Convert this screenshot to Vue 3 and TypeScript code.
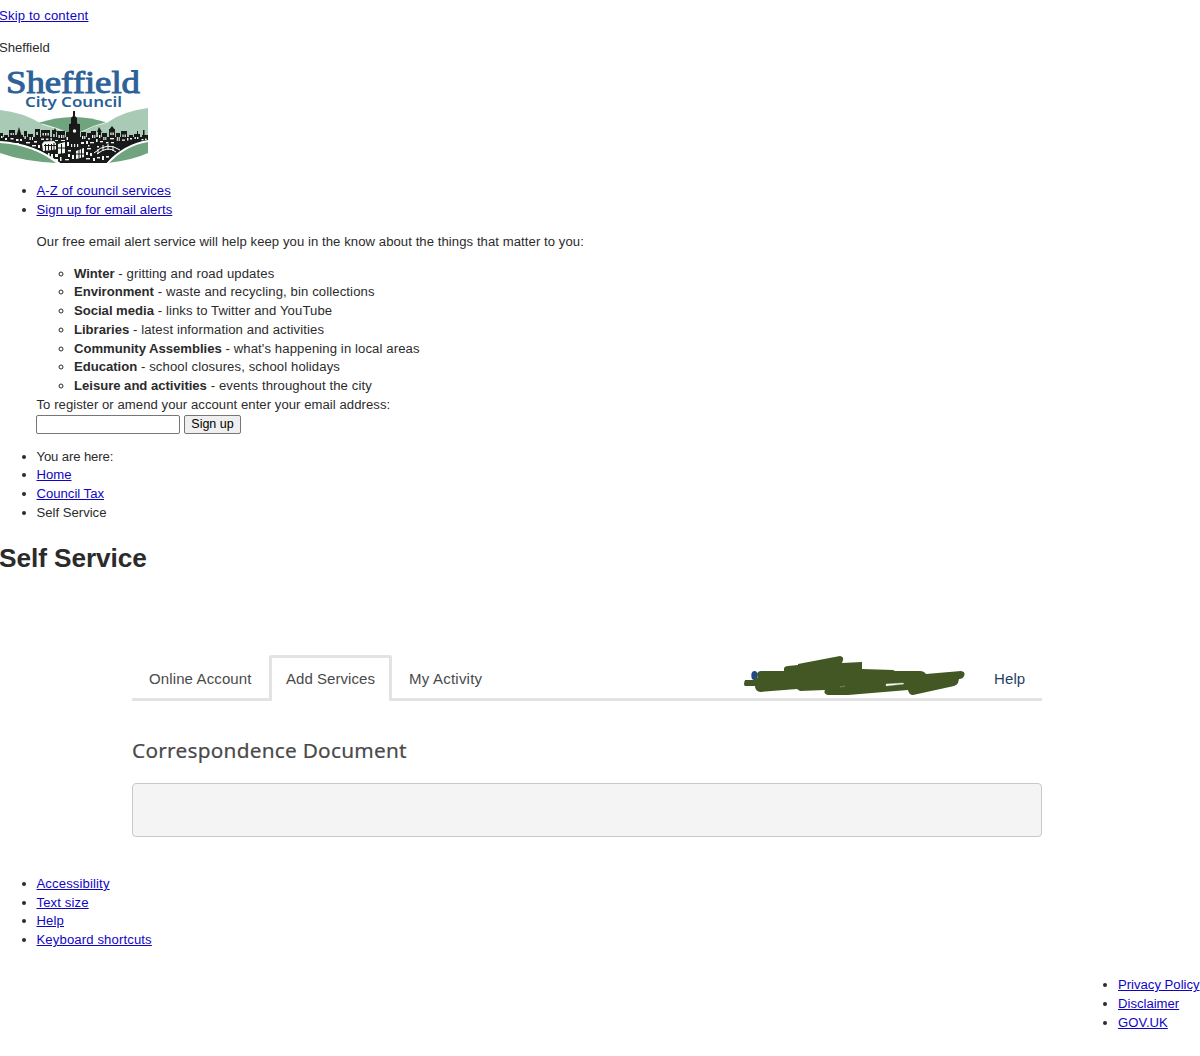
<script setup lang="ts">
interface Alert { name: string; text: string }

const alerts: Alert[] = [
  { name: 'Winter', text: 'gritting and road updates' },
  { name: 'Environment', text: 'waste and recycling, bin collections' },
  { name: 'Social media', text: 'links to Twitter and YouTube' },
  { name: 'Libraries', text: 'latest information and activities' },
  { name: 'Community Assemblies', text: "what's happening in local areas" },
  { name: 'Education', text: 'school closures, school holidays' },
  { name: 'Leisure and activities', text: 'events throughout the city' },
]
const helpLinks: string[] = ['Accessibility', 'Text size', 'Help', 'Keyboard shortcuts']
const legalLinks: string[] = ['Privacy Policy', 'Disclaimer', 'GOV.UK']

// Skyline rooftops: x, y, width, height
const buildings: number[][] = [
  [0, 71, 3, 8], [4, 73, 4, 8], [9, 68, 6, 12], [15, 73, 8, 8], [24, 69, 3, 12], [28, 72, 5, 10],
  [35, 67, 5, 14], [41, 68, 9, 14], [52, 68, 4, 14], [57, 69, 8, 14], [66, 70, 4, 10],
  [69, 62, 11, 30], [81, 70, 5, 12], [87, 71, 4, 10], [91, 69, 5, 12], [98, 68, 3, 12], [102, 71, 5, 10],
  [109, 67, 6, 14], [116, 71, 4, 10], [121, 69, 6, 10], [129, 73, 4, 8], [134, 72, 6, 7], [142, 73, 6, 5],
]
// Lit windows: x, y, width, height
const windows: number[][] = [
  [1, 74, 1.5, 2], [5, 76, 2, 2], [10.5, 71, 1.3, 2], [12.8, 71, 1, 2], [10.5, 76, 3, 1.5], [16, 77, 2.5, 2],
  [20, 77, 2, 2], [16, 81, 3, 1.2], [24.5, 74, 1.3, 3], [29.5, 75, 1.3, 3], [32, 75, 1, 3], [26, 80, 4, 1.4],
  [32, 83, 4, 1.4], [34, 79, 3, 1.6], [38, 83, 2, 3], [36.3, 70, 1.5, 3], [42.5, 71, 1.3, 2.5], [45, 71, 1.3, 2.5],
  [47.5, 71, 1.3, 2.5], [41, 76.5, 3, 1.4], [46, 76.5, 2.5, 1.4], [50.5, 76, 1.3, 2.6], [53.3, 72, 1.3, 3],
  [58.5, 73, 1.3, 3], [61, 73, 1.3, 3], [63.3, 73, 1, 3], [55, 78, 3, 1], [61, 78, 4, 1], [66.5, 75, 1.5, 3],
  [82, 74, 1.3, 3], [84.2, 74, 1.2, 3], [81, 80, 3, 2], [86, 79, 2, 3], [88, 76, 2, 1.5], [92, 73, 1.3, 3],
  [94.3, 73, 1, 3], [90, 80, 4, 1.3], [96, 77, 1.6, 3], [99, 73, 1.3, 3], [100, 79, 3, 1.3], [103.3, 75, 1.2, 3],
  [105.3, 75, 1, 3], [106, 80, 2.5, 1.4], [110.3, 70.5, 1.3, 2.5], [112.5, 70.5, 1.3, 2.5], [110, 76, 4, 1.3],
  [111, 80, 3, 1.3], [116.8, 75, 1, 4], [118.7, 75, 1, 4], [122.4, 72.5, 1.2, 2.5], [124.6, 72.5, 1.2, 2.5],
  [122, 77.5, 3, 1.3], [127, 76, 1.4, 2.5], [130, 76, 2, 1.5], [134.5, 75, 1.4, 2], [137, 75, 1.4, 2], [141.5, 77, 2, 1.3],
  [145, 76.5, 1.6, 1.5], [48, 91, 1.5, 3], [51, 92, 2, 4], [55, 92, 3, 3], [55, 97, 3, 2], [60, 95, 1.5, 4],
  [67, 80, 2, 4], [71, 82, 1.2, 3], [74, 82, 1.2, 3], [77, 82, 1.2, 3], [68, 88, 3, 1.5], [68, 92, 2, 3],
  [65, 97, 4, 1.3], [72, 93, 2, 4], [87, 86, 4, 1.4], [86, 90, 2, 3], [90, 91, 2, 3], [86, 96, 4, 1.4],
  [93, 96, 2, 3], [97, 95, 3, 1.4], [102, 94, 2, 4], [106, 94, 3, 1.6], [97, 84, 2, 1.5], [88, 83, 1.5, 1.5],
]
</script>

<template>
  <div class="page">
    <a class="skip" href="#content">Skip to content</a>
    <div class="site">Sheffield</div>
    <svg class="logo" width="148" height="102" viewBox="0 0 148 102">
      <text class="brand" x="6" y="30.5" textLength="134" lengthAdjust="spacingAndGlyphs">Sheffield</text>
      <text class="brand-sub" x="25" y="45" textLength="97" lengthAdjust="spacingAndGlyphs">City Council</text>
      <path d="M38 61Q74 49 108 61L98 75H50Z" fill="#6fa47f" />
      <path d="M0 48Q22 50 42 62Q58 65 69 71V80H0Z" fill="#a9cbb5" />
      <path d="M148 46Q124 49 108 60Q96 63 79 72V80H148Z" fill="#a9cbb5" />
      <path d="M42 62Q57 66 69 72M79 71Q94 63 108 60" fill="none" stroke="#fff" stroke-width=".8" />
      <path d="M0 79Q31 82 56 101Q22 99 0 91Z" fill="#6fa47f" />
      <path d="M148 78Q126 82 108 101Q133 98 148 91Z" fill="#6fa47f" />
      <g fill="#171a19">
        <path d="M0 75H148V79Q124 83 107 101H60Q34 82 0 80Z" />
        <rect v-for="(b, i) in buildings" :key="i" :x="b[0]" :y="b[1]" :width="b[2]" :height="b[3]" />
        <path d="M16 75L19 65L22 75ZM53 70L55 66L57 70ZM97 70L99 65L102 70ZM109 68L112 64L115 68ZM137 73V69H138V73ZM143 75V68H144.5V75Z" />
        <path d="M69 64L71 61V56L73 54V49H75V54L77 56V61L80 64Z" />
      </g>
      <path d="M0 80Q34 82 60 102M148 79Q124 83 107 102" fill="none" stroke="#fff" stroke-width="1.8" />
      <g fill="#f3f5f2">
        <rect v-for="(w, i) in windows" :key="i" :x="w[0]" :y="w[1]" :width="w[2]" :height="w[3]" />
        <path d="M42 82L44 79.5L54 79L56 81.5V87.5L43 89ZM58 82L65 80V91L58 92ZM76 89L84 86V95L76 97Z" />
        <circle cx="74.5" cy="69" r="1.7" />
      </g>
      <path d="M45.5 82V89M48.5 82V88M51.5 82V88M54 81V88M44 83.5H56M61.5 82V92M58 86H65M79 87V96M81.5 87V96M76 92H84" stroke="#171a19" stroke-width="1" />
      <path d="M94 91Q107 79 120 88M97 92Q108 83 116 90M98 87V92M103 83V89M108 82V88M113 84V89" fill="none" stroke="#fff" stroke-width="1" />
    </svg>

    <ul class="top">
      <li><a class="az" href="#az">A-Z of council services</a></li>
      <li>
        <a class="signup" href="#alerts">Sign up for email alerts</a>
        <p class="intro">Our free email alert service will help keep you in the know about the things that matter to you:</p>
        <ul class="alerts">
          <li v-for="a in alerts" :key="a.name"><strong>{{ a.name }}</strong> - {{ a.text }}</li>
        </ul>
        <div class="register">To register or amend your account enter your email address:</div>
        <form class="form" @submit.prevent>
          <input type="text" aria-label="Email address" />
          <button type="submit">Sign up</button>
        </form>
      </li>
    </ul>

    <ul class="crumbs">
      <li class="here">You are here:</li>
      <li><a href="#home">Home</a></li>
      <li><a href="#tax">Council Tax</a></li>
      <li>Self Service</li>
    </ul>

    <h1>Self Service</h1>

    <main id="content">
      <nav class="tabs">
        <span class="tab online">Online Account</span>
        <span class="tab active">Add Services</span>
        <span class="tab activity">My Activity</span>
        <span class="rest">
          <svg class="scribble" width="222" height="42" viewBox="0 0 222 42">
            <ellipse cx="10.5" cy="19.5" rx="3.2" ry="4.5" fill="#1f4a86" />
            <path d="M13 18Q14 15 17 15L40 15V12Q41 10 44 10L54 9V8L96 0Q100 1 99 4L98 7L118 6V13L149 14L151 15H176Q180 15 182 18L217 15Q222 16 220 20Q219 23 215 23L214 27Q213 29 210 30L169 39Q165 39 164 34L104 39H84Q79 38 81 34L56 35L53 33L16 36Q11 35 11 30H1Q-1 29 1 24H11V21L14 22Z" fill="#425723" />
            <path d="M142 28L159 27L160 28L142 30ZM96 31L101 30" fill="#fff" stroke="#c8cebd" stroke-width=".4" />
          </svg>
          <a class="help" href="#help">Help</a>
        </span>
      </nav>
      <h2>Correspondence Document</h2>
      <div class="panel"></div>
    </main>

    <ul class="footer">
      <li v-for="l in helpLinks" :key="l"><a href="#">{{ l }}</a></li>
    </ul>
    <ul class="legal">
      <li v-for="l in legalLinks" :key="l"><a href="#">{{ l }}</a></li>
    </ul>
  </div>
</template>

<style>
body { background: #fff; overflow: hidden; }
</style>

<style scoped>
.page {
  width: 1200px;
  height: 1056px;
  box-sizing: border-box;
  padding-top: 7px;
  overflow: hidden;
  font: 13.125px/18.75px "Liberation Sans", Arial, sans-serif;
  color: #2b2b2b;
}
a { color: #1004c4; }
.skip { display: block; width: max-content; margin-left: -1px; letter-spacing: .18px; }
.site { margin: 13px 0 4px -1px; }
.logo { display: block; }
.brand { font: 31.5px "Liberation Serif", serif; fill: #2d6299; stroke: #2d6299; stroke-width: 1; }
.brand-sub { font: 600 13.5px "Noto Sans", sans-serif; fill: #2a5f94; }
ul { margin: 0; padding: 0 0 0 36.5px; }
.top { margin-top: 18.75px; letter-spacing: .07px; }
.az { letter-spacing: .11px; }
.intro { margin: 13.1px 0; }
.alerts { padding-left: 37.5px; list-style: circle; letter-spacing: .11px; }
.alerts strong { letter-spacing: -.02px; }
.register { letter-spacing: .055px; }
.form { display: flex; gap: 4px; height: 19px; letter-spacing: 0; }
input { box-sizing: border-box; width: 144px; height: 19px; padding: 0; border: 1px solid #767676; border-radius: 2px; background: #fff; margin-left: -.5px; }
button {
  box-sizing: border-box;
  width: 57px;
  height: 19px;
  padding: 0;
  border: 1px solid #767676;
  border-radius: 2px;
  background: #efefef;
  color: #000;
  font: 12.5px/16px "Liberation Sans", Arial, sans-serif;
}
.crumbs { margin-top: 14px; }
.here { letter-spacing: -.12px; }
h1 { margin: 18.25px 0 0 -1px; font-size: 26.25px; line-height: 34px; letter-spacing: -.09px; }
main { width: 910px; margin: 80px 0 0 132px; }
.tabs { display: flex; height: 46px; font-size: 15px; letter-spacing: .12px; color: #4a4a4a; }
.tab { box-sizing: border-box; border-bottom: 3px solid #e3e3e3; line-height: 47px; padding-left: 17px; white-space: nowrap; }
.online { width: 137px; }
.active { width: 123px; padding-left: 14px; line-height: 41px; letter-spacing: .05px; border: 3px solid #e3e3e3; border-bottom: 0; border-radius: 3px 3px 0 0; }
.activity { width: 110px; letter-spacing: .22px; }
.rest { box-sizing: border-box; display: flex; flex: 1; padding: 1px 0 0 242px; border-bottom: 3px solid #e3e3e3; }
.scribble { flex: none; }
.help { margin-left: 28px; line-height: 45px; color: #1f3f66; text-decoration: none; }
h2 { margin: 34.5px 0 0; font: 400 20.8px/30px "Noto Sans", sans-serif; letter-spacing: .25px; color: #4a4a4a; white-space: nowrap; -webkit-text-stroke: .2px #4a4a4a; }
.panel { box-sizing: border-box; height: 54px; margin-top: 17.5px; border: 1px solid #c9c9c9; border-radius: 4px; background: #f4f4f4; }
.footer { margin-top: 38px; letter-spacing: .13px; }
.legal { width: 82px; margin: 26.5px 0 0 auto; padding: 0; white-space: nowrap; }
</style>
